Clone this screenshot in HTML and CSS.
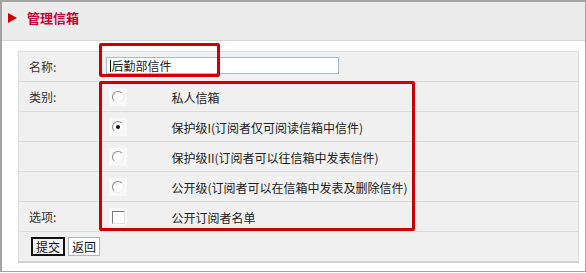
FILE: index.html
```html
<!DOCTYPE html>
<html lang="zh-CN">
<head>
<meta charset="UTF-8" />
<title>管理信箱</title>
<link rel="stylesheet" href="styles.css">
</head>
<body>
  <div class="frame">
    <div class="title-bar">
      <span class="arrow"></span>
      <span class="title">管理信箱</span>
    </div>
    <div class="content">
      <table class="form-table">
        <tr>
          <td class="label">名称:</td>
          <td><div class="text-input"><span class="caret"></span>后勤部信件</div></td>
        </tr>
        <tr>
          <td class="label">类别:</td>
          <td><span class="box"><span class="radio"></span></span><span class="opt">私人信箱</span></td>
        </tr>
        <tr>
          <td class="label"></td>
          <td><span class="box"><span class="radio checked"></span></span><span class="opt">保护级I(订阅者仅可阅读信箱中信件)</span></td>
        </tr>
        <tr>
          <td class="label"></td>
          <td><span class="box"><span class="radio"></span></span><span class="opt">保护级II(订阅者可以往信箱中发表信件)</span></td>
        </tr>
        <tr>
          <td class="label"></td>
          <td><span class="box"><span class="radio"></span></span><span class="opt">公开级(订阅者可以在信箱中发表及删除信件)</span></td>
        </tr>
        <tr>
          <td class="label">选项:</td>
          <td><span class="box"><span class="check"></span></span><span class="opt">公开订阅者名单</span></td>
        </tr>
        <tr>
          <td colspan="2" class="actions">
            <button class="btn default">提交</button><button class="btn">返回</button>
          </td>
        </tr>
      </table>
      <!-- annotation boxes -->
      <div class="mark mark-name"></div>
      <div class="mark mark-options"></div>
    </div>
  </div>
</body>
</html>
```

FILE: styles.css
```css
* {
  box-sizing: border-box;
}
body {
  margin: 0;
  background: #fff;
  font-family: "Noto Sans CJK SC", "Liberation Sans", sans-serif;
  font-size: 12px;
  color: #222;
}

.frame {
  width: 586px;
  height: 272px;
  border: 2px solid #a3a3a3;
  border-right-width: 1px;
  border-bottom-width: 1px;
  position: relative;
}

.title-bar {
  height: 39px;
  background: #ececec;
  border-bottom: 1px solid #d6d6d6;
  display: flex;
  align-items: center;
  padding-left: 6px;
}
.arrow {
  width: 0;
  height: 0;
  border-top: 5px solid transparent;
  border-bottom: 5px solid transparent;
  border-left: 9px solid #cc0000;
  margin-right: 10px;
  margin-top: -6px;
}
.title {
  color: #cc0033;
  font-weight: 700;
  font-size: 13px;
  margin-top: -7px;
}

.content {
  position: relative;
  padding: 10px 6px 0 16px;
}

.form-table {
  width: 561px;
  border-collapse: collapse;
  background: #f0f0f0;
  border: 1px solid #dcdcdc;
  border-bottom: 2px solid #d2d2d2;
}
.form-table td {
  height: 30px;
  padding: 0;
  border-top: 1px solid #dcdcdc;
  vertical-align: middle;
}
.form-table td.label {
  width: 82px;
  padding-left: 10px;
  padding-bottom: 1px;
  color: #333;
}

.text-input {
  width: 233px;
  height: 17px;
  margin-left: 5px;
  margin-top: -2px;
  border: 1px solid #a6bccc;
  background: #fff;
  line-height: 15px;
  padding-left: 3px;
  display: flex;
  align-items: center;
}
.caret {
  width: 1px;
  height: 12px;
  background: #000;
  margin-right: 1px;
}

.box {
  display: inline-block;
  width: 18px;
  height: 18px;
  margin-left: 8px;
  background: #f8f8f8;
  vertical-align: middle;
  position: relative;
}
.radio {
  position: absolute;
  left: 3px;
  top: 3px;
  width: 12px;
  height: 12px;
  border-radius: 50%;
  border: 1px solid;
  border-color: #8a8a8a #eeeeee #eeeeee #8a8a8a;
  background: #fff;
}
.radio.checked::after {
  content: "";
  position: absolute;
  left: 3px;
  top: 3px;
  width: 4px;
  height: 4px;
  border-radius: 50%;
  background: #111;
}
.check {
  position: absolute;
  left: 3px;
  top: 3px;
  width: 13px;
  height: 13px;
  border: 1px solid;
  border-color: #7a7a7a #e4e4e4 #e4e4e4 #7a7a7a;
  background: #fff;
}
.opt {
  display: inline-block;
  margin-left: 45px;
  vertical-align: middle;
}

.actions {
  padding-left: 12px !important;
}
.btn {
  font-family: inherit;
  font-size: 12px;
  height: 19px;
  padding: 0 3px;
  line-height: 15px;
  background: #fff;
  border: 1px solid #aab8c4;
  margin-right: 3px;
  color: #111;
}
.btn.default {
  border: 2px solid #111;
  background: #f4f4f4;
}

.mark {
  position: absolute;
  border: 3px solid #cc0000;
  border-radius: 2px;
}
.mark-name {
  left: 97px;
  top: 2px;
  width: 121px;
  height: 34px;
}
.mark-options {
  left: 97px;
  top: 40px;
  width: 316px;
  height: 150px;
}
```
